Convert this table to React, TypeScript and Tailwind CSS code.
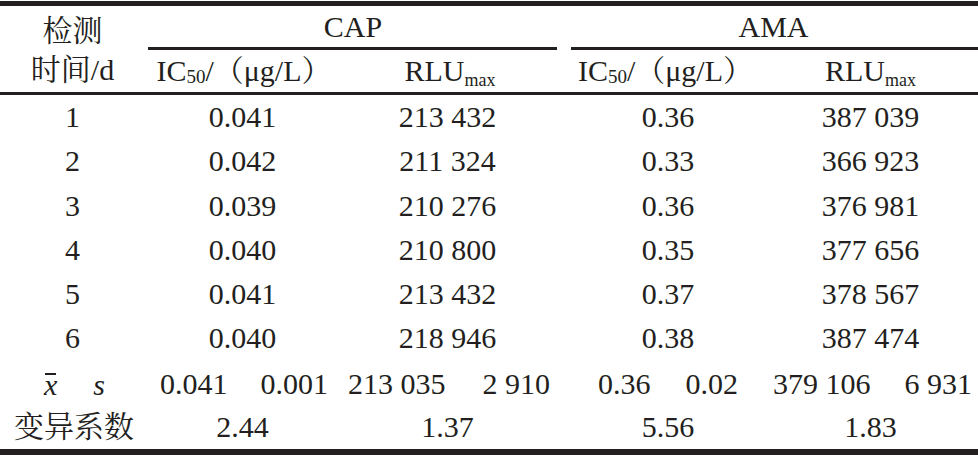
import React from "react";

const rows = [
  ["1", "0.041", "213 432", "0.36", "387 039"],
  ["2", "0.042", "211 324", "0.33", "366 923"],
  ["3", "0.039", "210 276", "0.36", "376 981"],
  ["4", "0.040", "210 800", "0.35", "377 656"],
  ["5", "0.041", "213 432", "0.37", "378 567"],
  ["6", "0.040", "218 946", "0.38", "387 474"],
];

function IC50() {
  return (
    <span className="whitespace-nowrap">
      IC<sub className="text-[19px] relative top-[2px] align-baseline">50</sub>/（μg/L）
    </span>
  );
}

function RLU() {
  return (
    <span className="whitespace-nowrap">
      RLU<sub className="text-[18px] relative top-[5px] align-baseline">max</sub>
    </span>
  );
}

export default function App() {
  return (
    <div className="w-[978px] h-[456px] bg-white text-[#231f20] text-[30px] leading-none font-['Liberation_Serif','Noto_Serif_CJK_SC','Noto_Sans_CJK_SC',serif]">
      <div className="h-px" />
      <div className="border-t-[5px] border-[#231f20]" />
      {/* header */}
      <div className="grid grid-cols-[145px_195px_225px_206px_207px] border-b-[3px] border-[#231f20]">
        <div className="row-span-2 flex flex-col items-center justify-center gap-[9px] pt-[2px]">
          <span>检测</span>
          <span>时间/d</span>
        </div>
        <div className="col-span-2 flex flex-col">
          <div className="h-[41px] flex items-center justify-center pr-[4px] pt-px">CAP</div>
          <div className="border-b-[3px] border-[#231f20] ml-[3px] mr-[8px]" />
        </div>
        <div className="col-span-2 flex flex-col">
          <div className="h-[41px] flex items-center justify-center pl-[4px] pt-px">AMA</div>
          <div className="border-b-[3px] border-[#231f20] ml-[6px]" />
        </div>
        <div className="h-[42px] flex items-center justify-center pl-[3px]">
          <IC50 />
        </div>
        <div className="h-[42px] flex items-center justify-center pr-[5px]">
          <RLU />
        </div>
        <div className="h-[42px] flex items-center justify-center pr-[5px]">
          <IC50 />
        </div>
        <div className="h-[42px] flex items-center justify-center pr-[8px]">
          <RLU />
        </div>
      </div>
      {/* body */}
      <div className="grid grid-cols-[145px_195px_225px_206px_207px] auto-rows-[44.25px] border-b-[6px] border-[#231f20]">
        {rows.map((r) => (
          <React.Fragment key={r[0]}>
            <div className="flex items-center justify-center">{r[0]}</div>
            <div className="flex items-center justify-center">{r[1]}</div>
            <div className="flex items-center justify-center pr-[10px]">{r[2]}</div>
            <div className="flex items-center justify-center">{r[3]}</div>
            <div className="flex items-center justify-center pr-[8px]">{r[4]}</div>
          </React.Fragment>
        ))}
        <div className="flex items-center justify-center gap-[36px] pl-[4px] pt-[4px]">
          <span className="relative italic">
            x
            <span className="absolute left-[1px] top-[3px] w-[11px] h-[2px] bg-[#231f20]" />
          </span>
          <span className="italic">s</span>
        </div>
        <div className="flex items-center justify-between pl-[15px] pr-[12px] pt-[3px]">
          <span>0.041</span>
          <span>0.001</span>
        </div>
        <div className="flex items-center justify-between pl-[8px] pr-[15px] pt-[3px]">
          <span>213 035</span>
          <span>2 910</span>
        </div>
        <div className="flex items-center justify-between pl-[33px] pr-[33px] pt-[3px]">
          <span>0.36</span>
          <span>0.02</span>
        </div>
        <div className="flex items-center justify-between pl-[2px] pr-[6px] pt-[3px]">
          <span>379 106</span>
          <span>6 931</span>
        </div>
        <div className="flex items-center justify-center pl-[3px]">变异系数</div>
        <div className="flex items-center justify-center">2.44</div>
        <div className="flex items-center justify-center pr-[10px]">1.37</div>
        <div className="flex items-center justify-center">5.56</div>
        <div className="flex items-center justify-center pr-[8px]">1.83</div>
      </div>
    </div>
  );
}
